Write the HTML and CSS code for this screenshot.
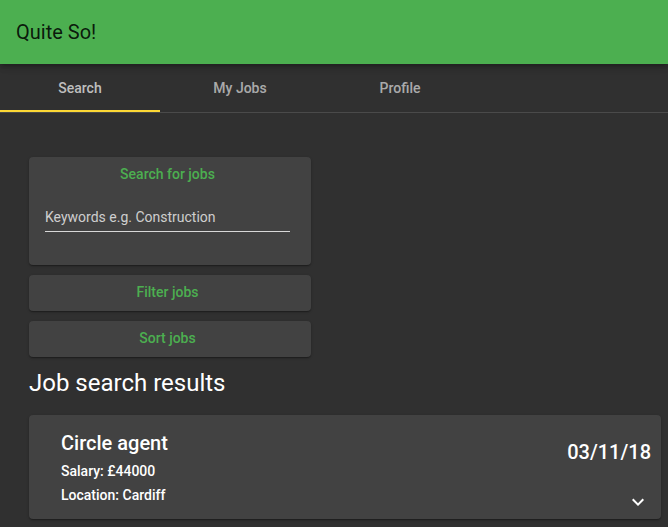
FILE: index.html
```html
<!DOCTYPE html>
<html>
<head>
<meta charset="utf-8">
<link rel="stylesheet" href="styles.css">
</head>
<body>
<header class="appbar">Quite So!</header>
<nav class="tabs">
  <div class="tab active">Search</div>
  <div class="tab">My Jobs</div>
  <div class="tab">Profile</div>
</nav>
<main class="content">
  <section class="panel search-panel">
    <div class="panel-title">Search for jobs</div>
    <div class="field">
      <input class="field-input" type="text" placeholder="Keywords e.g. Construction">
    </div>
  </section>
  <section class="panel button-panel">Filter jobs</section>
  <section class="panel button-panel">Sort jobs</section>
  <h2 class="results-title">Job search results</h2>
  <article class="job-card">
    <div class="job-info">
      <div class="job-title">Circle agent</div>
      <div class="job-line">Salary: £44000</div>
      <div class="job-line">Location: Cardiff</div>
    </div>
    <div class="job-side">
      <div class="job-date">03/11/18</div>
      <svg class="chevron" width="24" height="24" viewBox="0 0 24 24"><path d="M7.41 8.59 12 13.17l4.59-4.58L18 10l-6 6-6-6z" fill="#fff"/></svg>
    </div>
  </article>
</main>
</body>
</html>
```
FILE: styles.css
```css
* { box-sizing: border-box; }
html, body { margin: 0; padding: 0; }
body {
  background: #303030;
  font-family: Roboto, "Liberation Sans", sans-serif;
  color: #fff;
  width: 668px;
  height: 527px;
  overflow: hidden;
}
.appbar {
  height: 64px;
  background: #4caf50;
  color: rgba(0,0,0,0.87);
  font-size: 20px;
  display: flex;
  align-items: center;
  padding: 0 16px;
  box-shadow: 0 2px 4px -1px rgba(0,0,0,0.2), 0 4px 5px 0 rgba(0,0,0,0.14), 0 1px 10px 0 rgba(0,0,0,0.12);
  position: relative;
  z-index: 1;
}
.tabs {
  display: flex;
  height: 49px;
  border-bottom: 1px solid #4a4a4a;
}
.tab {
  width: 160px;
  height: 48px;
  display: flex;
  align-items: center;
  justify-content: center;
  font-size: 14px;
  font-weight: 500;
  color: rgba(255,255,255,0.6);
  padding-bottom: 1px;
}
.tab.active {
  color: rgba(255,255,255,0.7);
  border-bottom: 2px solid #fdd835;
  padding-bottom: 0;
  padding-top: 2px;
}
.content {
  padding: 44px 7px 0 29px;
}
.panel {
  width: 282px;
  background: #424242;
  border-radius: 4px;
  box-shadow: 0 1px 3px 0 rgba(0,0,0,0.2), 0 1px 1px 0 rgba(0,0,0,0.14), 0 2px 1px -1px rgba(0,0,0,0.12);
  margin-bottom: 10px;
}
.search-panel {
  height: 108px;
  padding: 8px 21px 0 16px;
}
.panel-title {
  text-align: center;
  color: #4caf50;
  font-size: 14px;
  font-weight: 500;
  line-height: 18px;
}
.field {
  margin-top: 20px;
  border-bottom: 1px solid #d8d8d8;
}
.field-input {
  display: block;
  width: 100%;
  background: transparent;
  border: 0;
  outline: 0;
  padding: 6px 0 5px;
  font-family: Roboto, "Liberation Sans", sans-serif;
  font-size: 14px;
  line-height: 17px;
  color: #fff;
}
.field-input::placeholder {
  color: rgba(255,255,255,0.75);
  opacity: 1;
}
.button-panel {
  height: 36px;
  padding: 0 21px 2px 16px;
  display: flex;
  align-items: center;
  justify-content: center;
  color: #4caf50;
  font-size: 14px;
  font-weight: 500;
}
.results-title {
  margin: 0;
  font-size: 24px;
  font-weight: 400;
  line-height: 32px;
  height: 48px;
}
.job-card {
  width: 632px;
  height: 104px;
  background: #424242;
  border-radius: 4px;
  box-shadow: 0 1px 3px 0 rgba(0,0,0,0.2), 0 1px 1px 0 rgba(0,0,0,0.14), 0 2px 1px -1px rgba(0,0,0,0.12);
  display: flex;
  justify-content: space-between;
  padding: 14px 10px 0 32px;
}
.job-title {
  font-size: 20px;
  font-weight: 500;
  line-height: 28px;
  margin-bottom: 2px;
}
.job-line {
  font-size: 14px;
  font-weight: 500;
  line-height: 24px;
}
.job-side {
  display: flex;
  flex-direction: column;
  align-items: flex-end;
}
.job-date {
  font-size: 20px;
  font-weight: 500;
  line-height: 28px;
  margin-top: 9px;
}
.chevron {
  margin-top: 24px;
  margin-right: 1px;
}
```
